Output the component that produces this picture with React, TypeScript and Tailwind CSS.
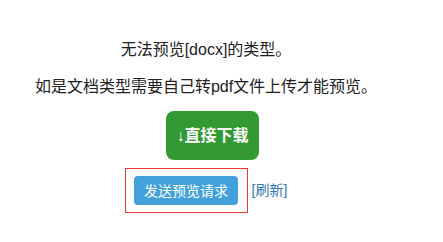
import React from 'react';

const font = "font-['Liberation_Sans','Noto_Sans_CJK_SC',sans-serif]";

export default function App() {
  return (
    <div className={`min-h-screen bg-white ${font}`}>
      <div className="w-[412px] flex flex-col items-center pt-[40px] text-[16px] text-[#222]">
        <p className="leading-[20px]">无法预览[docx]的类型。</p>
        <p className="mt-[17px] leading-[20px]">如是文档类型需要自己转pdf文件上传才能预览。</p>
        <a className="mt-[14px] ml-[13px] w-[93px] h-[49px] rounded-[8px] bg-[#339933] text-white font-bold flex items-center justify-center">
          ↓直接下载
        </a>
        <div className="mt-[8px] flex items-center">
          <div className="w-[123px] h-[45px] border border-[#ee3333] flex items-center justify-center">
            <button className="w-[104px] h-[29px] rounded-[4px] bg-[#42a1db] text-white text-[14px] leading-none">
              发送预览请求
            </button>
          </div>
          <a className="ml-[4px] text-[14px] text-[#337ab7]">[刷新]</a>
        </div>
      </div>
    </div>
  );
}
